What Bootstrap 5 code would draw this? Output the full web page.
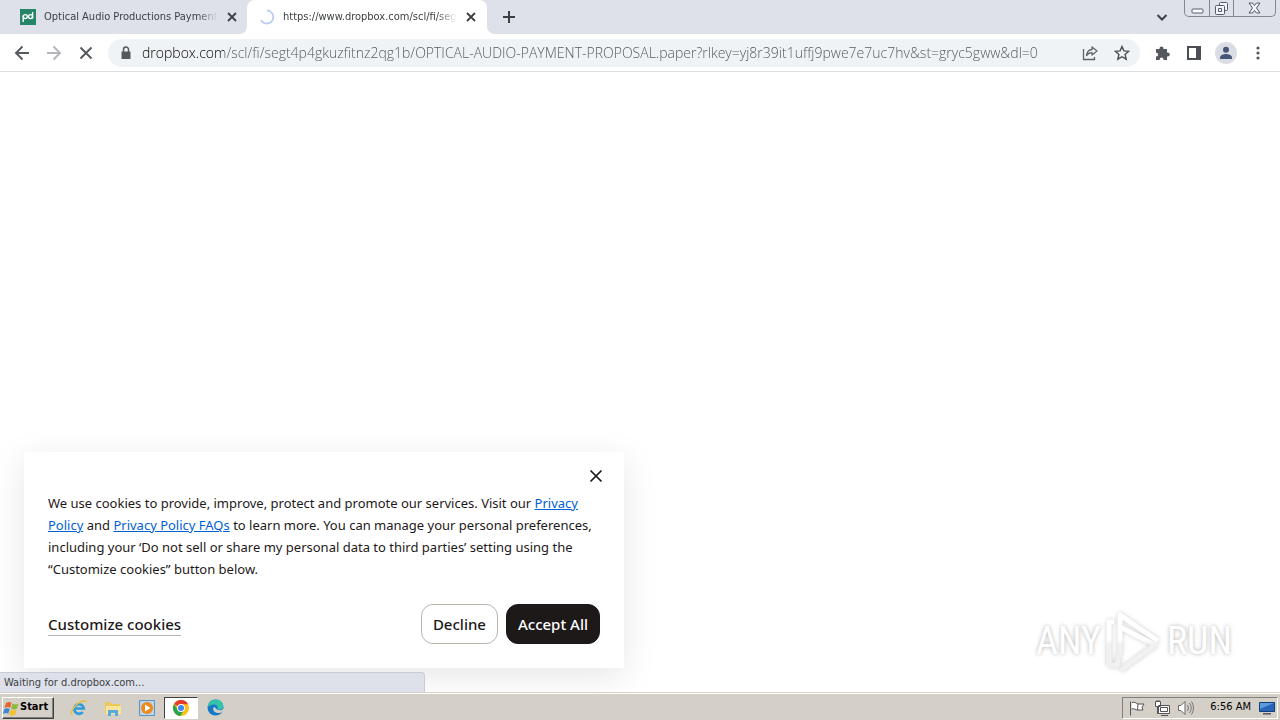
<!DOCTYPE html>
<html lang="en">
<head>
<meta charset="utf-8">
<meta name="viewport" content="width=device-width, initial-scale=1">
<title>dropbox.com</title>
<link href="https://cdn.jsdelivr.net/npm/bootstrap@5.3.0/dist/css/bootstrap.min.css" rel="stylesheet">
<style>
  body { font-family: "Noto Sans", sans-serif; color: #1e1919; background: #fff; }
  svg { display: block; flex: none; }
  .plain { border: 0; background: none; padding: 0; color: inherit; line-height: 1; }
  .ui-text { font-family: "DejaVu Sans Condensed", "DejaVu Sans", sans-serif; font-size: 11px; }

  /* Browser frame */
  .tab-strip { height: 34px; background: #dee1e9; color: #3c4043; }
  .tab { height: 34px; line-height: 16px; }
  .tab-first { width: 247px; padding: 0 9px 0 20px; }
  .tab-active { width: 240px; background: #fff; border-radius: 8px 8px 0 0; padding: 0 10px 0 12px; position: relative; }
  .tab-active::before, .tab-active::after { content: ""; position: absolute; bottom: 0; width: 8px; height: 8px; }
  .tab-active::before { left: -8px; background: radial-gradient(circle at 0 0, transparent 8px, #fff 8px); }
  .tab-active::after { right: -8px; background: radial-gradient(circle at 100% 0, transparent 8px, #fff 8px); }
  .tab-title { white-space: nowrap; overflow: hidden;
    -webkit-mask-image: linear-gradient(90deg, #000 88%, transparent); mask-image: linear-gradient(90deg, #000 88%, transparent); }
  .win-controls { height: 17px; border: 1px solid #84878f; border-top: 0; border-radius: 0 0 5px 5px; margin-right: 4px; }
  .win-controls button { height: 16px; width: 24px; }
  .win-controls button + button { border-left: 1px solid #84878f; }
  .win-controls button:last-child { width: 42px; }
  .toolbar { height: 38px; border-bottom: 1px solid #dcdee0; color: #5f6368; padding: 0 11px 0 14px; }
  .nav-keys { margin-right: 14px; }
  .tool-keys { gap: 10px; margin-left: 11px; }
  .tool-keys button { width: 22px; }
  .omnibox { height: 28px; border-radius: 14px; background: #f0f3f6; padding: 0 10px; }
  .url { border: 0; outline: 0; padding: 0; min-width: 0; height: 24px; font-family: "Open Sans", sans-serif; font-size: 14px; font-weight: 300; color: #5f6368;
    background: linear-gradient(90deg, #000 82px, #50545a 82px); -webkit-background-clip: text; background-clip: text;
    -webkit-text-fill-color: transparent; }

  /* Page */
  .cookie-box { position: absolute; left: 24px; bottom: 24px; width: 600px; max-width: calc(100% - 48px);
    background: #fff; padding: 16px 20px 24px; box-shadow: 0 8px 32px rgba(0,0,0,.1); }
  .cookie-text { font-size: 13px; line-height: 22px; }
  .cookie-text a { color: #0061d5; }
  .customize { font-size: 15px; line-height: 22px; font-weight: 500; color: #1e1919; border-bottom: 1px solid #b5b3b0; }
  .choice { height: 40px; border-radius: 12px; font-size: 15px; font-weight: 500; padding: 0 11px; border: 1px solid #bbb5ae; color: #1e1919; background: #fff; }
  .choice-dark { background: #1e1919; border-color: #1e1919; color: #fff; }
  .status-line { position: absolute; left: 0; bottom: 0; width: 425px; height: 20px; background: #dee1e9; border: 1px solid #c8cbd3;
    border-width: 1px 1px 0 0; border-radius: 0 4px 0 0; line-height: 20px; padding-left: 4px; color: #3c4043; }
  .watermark { position: absolute; right: 48px; bottom: 18px; color: #fff; font: 38px/62px "Roboto Condensed", Roboto, sans-serif;
    text-shadow: 0 0 4px rgba(0,0,0,.3); }
  .watermark svg { filter: drop-shadow(0 0 2px rgba(0,0,0,.2)); }

  /* Taskbar */
  .taskbar { height: 28px; background: #d4d0c8; border-top: 1px solid #d4d0c8; box-shadow: inset 0 1px #fff; padding: 2px 2px 0 2px; color: #000; }
  .start { width: 52px; height: 22px; background: #d4d0c8; border: 1px solid; border-color: #fff #404040 #404040 #fff;
    box-shadow: inset -1px -1px #808080; font-weight: bold; color: #000; }
  .task { width: 34px; height: 22px; }
  .task-open { background: #fff; border: 1px solid; border-color: #404040 #fff #fff #404040; }
  .tray { height: 22px; border: 1px solid; border-color: #808080 #fff #fff #808080; padding: 0 2px 0 5px; }
</style>
</head>
<body class="d-flex flex-column min-vh-100">

<header>
  <div class="tab-strip d-flex">
    <div class="tab tab-first ui-text d-flex align-items-center">
      <svg width="16" height="16" viewBox="0 0 16 16"><path fill="#248567" d="M0 0h16v16H0z"/><g fill="none" stroke="#fff" stroke-width="1.4"><path d="M3.2 13V6.2"/><circle cx="5.3" cy="7.6" r="2"/><circle cx="10.5" cy="7.6" r="2"/><path d="M12.6 3v6.6"/></g></svg>
      <span class="tab-title flex-grow-1 ms-2">Optical Audio Productions Payment Proposal</span>
      <button class="plain ms-2" aria-label="Close tab"><svg width="12" height="12" viewBox="0 0 12 12"><path d="M2 2l8 8M10 2l-8 8" stroke="#3c4043" stroke-width="1.8"/></svg></button>
    </div>
    <div class="tab tab-active ui-text d-flex align-items-center">
      <svg width="16" height="16" viewBox="0 0 16 16"><path d="M8 1.500A6.500 6.500 0 1 1 2 11" fill="none" stroke="#bccbf3" stroke-width="1.800"/></svg>
      <span class="tab-title flex-grow-1 ms-2">https://www.dropbox.com/scl/fi/segt4p4gkuz</span>
      <button class="plain ms-2" aria-label="Close tab"><svg width="12" height="12" viewBox="0 0 12 12"><path d="M2 2l8 8M10 2l-8 8" stroke="#3c4043" stroke-width="1.8"/></svg></button>
    </div>
    <button class="plain ms-3" aria-label="New tab"><svg width="12" height="12" viewBox="0 0 12 12"><path d="M6 0v12M0 6h12" stroke="#3c4043" stroke-width="2"/></svg></button>
    <div class="d-flex ms-auto">
      <button class="plain me-3" aria-label="Search tabs"><svg width="12" height="12" viewBox="0 0 12 12"><path d="M1.5 4L6 8.500 10.500 4" fill="none" stroke="#3c4043" stroke-width="2"/></svg></button>
      <div class="win-controls d-flex">
        <button class="plain" aria-label="Minimize"><svg class="mx-auto" width="13" height="12" viewBox="0 0 13 12"><rect x="1" y="7" width="11" height="4" rx="1" fill="#fff" stroke="#555a66"/></svg></button>
        <button class="plain" aria-label="Restore"><svg class="mx-auto" width="13" height="13" viewBox="0 0 13 13"><g fill="#f3f4f8" stroke="#555a66"><rect x="4.500" y=".5" width="8" height="8" rx="1"/><rect x=".5" y="3.500" width="9" height="9" rx="1"/><path d="M3.500 6.500h3v3h-3z"/></g></svg></button>
        <button class="plain" aria-label="Close"><svg class="mx-auto" width="13" height="12" viewBox="0 0 13 12"><path d="M1 1h3.500l2 2.500L8.500 1H12L8.500 6l3.500 5H8.500l-2-2.500-2 2.500H1l3.500-5z" fill="#f3f4f8" stroke="#555a66"/></svg></button>
      </div>
    </div>
  </div>

  <div class="toolbar d-flex align-items-center">
    <div class="nav-keys d-flex gap-3">
      <button class="plain" aria-label="Back"><svg width="16" height="16" viewBox="0 0 16 16"><path d="M15 8H2M8.500 1.500L2 8l6.500 6.500" fill="none" stroke="#55585c" stroke-width="1.900"/></svg></button>
      <button class="plain" aria-label="Forward"><svg width="16" height="16" viewBox="0 0 16 16"><path d="M1 8h13M7.500 1.500L14 8l-6.500 6.500" fill="none" stroke="#b4b6b9" stroke-width="1.900"/></svg></button>
      <button class="plain" aria-label="Stop"><svg width="16" height="16" viewBox="0 0 16 16"><path d="M2.500 2.500l11 11M13.500 2.500l-11 11" stroke="#55585c" stroke-width="1.900"/></svg></button>
    </div>
    <div class="omnibox d-flex align-items-center flex-grow-1">
      <svg width="16" height="16" viewBox="0 0 16 16"><path d="M3.500 6.500h9V14h-9z" fill="#55585c"/><path d="M5.500 7V4.500a2.500 2.500 0 0 1 5 0V7" fill="none" stroke="#55585c" stroke-width="1.500"/></svg>
      <input class="url flex-grow-1 mx-2" type="text" aria-label="Address" value="dropbox.com/scl/fi/segt4p4gkuzfitnz2qg1b/OPTICAL-AUDIO-PAYMENT-PROPOSAL.paper?rlkey=yj8r39it1uffj9pwe7e7uc7hv&amp;st=gryc5gww&amp;dl=0">
      <button class="plain me-3" aria-label="Share"><svg width="16" height="16" viewBox="0 0 16 16"><g fill="none" stroke="#5f6368" stroke-width="1.300"><path d="M1.500 4v10.500h11V12"/><path d="M4.500 10.500c.5-4 2.500-5.700 5.500-6V2l5 4-5 4V7.700c-2.500 0-4 .8-5.500 2.800z" stroke-linejoin="round"/></g></svg></button>
      <button class="plain" aria-label="Bookmark"><svg width="16" height="16" viewBox="0 0 16 16"><path d="M8 1.500l1.900 4.400 4.800.4-3.600 3.200 1.100 4.700L8 11.700l-4.200 2.500 1.100-4.700L1.300 6.300l4.800-.4z" fill="none" stroke="#4b4f54" stroke-width="1.400"/></svg></button>
    </div>
    <div class="tool-keys d-flex align-items-center">
      <button class="plain" aria-label="Extensions"><svg class="mx-auto" width="18" height="16" viewBox="0 0 18 16"><path d="M3 4h3.500v-.5a2 2 0 0 1 4 0V4H14v3.500h.8a2 2 0 0 1 0 4H14V15h-3.500v-.7a1.900 1.900 0 0 0-3.800 0v.7H3v-3.600h.7a1.900 1.900 0 0 0 0-3.700H3z" fill="#55585c"/></svg></button>
      <button class="plain" aria-label="Side panel"><svg class="mx-auto" width="14" height="14" viewBox="0 0 14 14"><path d="M0 0h14v14H0zM2 2v10h7V2z" fill="#4b4e52" fill-rule="evenodd"/></svg></button>
      <button class="plain" aria-label="Profile"><svg width="22" height="22" viewBox="0 0 22 22"><circle cx="11" cy="11" r="11" fill="#dadde3"/><circle cx="11" cy="7.800" r="3" fill="#47557a"/><path d="M5 17v-1.500c0-2.500 4-3.500 6-3.500s6 1 6 3.500V17z" fill="#47557a"/></svg></button>
      <button class="plain" aria-label="Menu"><svg class="mx-auto" width="16" height="16" viewBox="0 0 16 16"><g fill="#55585c"><circle cx="8" cy="3" r="1.600"/><circle cx="8" cy="8" r="1.600"/><circle cx="8" cy="13" r="1.600"/></g></svg></button>
    </div>
  </div>
</header>

<main class="flex-grow-1 position-relative overflow-hidden">
  <section class="cookie-box" aria-label="Cookies">
    <div class="d-flex justify-content-end mb-2">
      <button class="plain" aria-label="Close"><svg width="16" height="16" viewBox="0 0 16 16"><path d="M2.500 2.500l11 11M13.500 2.500l-11 11" stroke="#1e1919" stroke-width="1.700"/></svg></button>
    </div>
    <p class="cookie-text mb-4 px-1">We use cookies to provide, improve, protect and promote our services. Visit our <a href="#">Privacy Policy</a> and <a href="#">Privacy Policy FAQs</a> to learn more. You can manage your personal preferences, including your ‘Do not sell or share my personal data to third parties’ setting using the “Customize cookies” button below.</p>
    <div class="d-flex align-items-center px-1">
      <a class="customize text-decoration-none me-auto" href="#">Customize cookies</a>
      <button class="choice me-2">Decline</button>
      <button class="choice choice-dark">Accept All</button>
    </div>
  </section>
  <div class="watermark d-flex">
    <span>ANY</span>
    <svg class="mx-1" width="58" height="64" viewBox="0 0 58 64">
      <defs><linearGradient id="sheen" gradientUnits="userSpaceOnUse" x1="0" y1="30" x2="0" y2="34"><stop stop-color="#fff"/><stop offset="1" stop-color="#f1f1f1"/></linearGradient></defs>
      <g fill="none" stroke="url(#sheen)" stroke-width="5" stroke-linejoin="round"><path d="M15 44V5l38 26"/><path d="M15 17l35 18L16 60"/><path d="M9 12H4v42l8 2 2-12"/></g></svg>
    <span>RUN</span>
  </div>
  <div class="status-line ui-text" role="status">Waiting for d.dropbox.com...</div>
</main>

<footer class="taskbar d-flex align-items-center">
  <button class="start ui-text d-flex align-items-center p-0"><svg width="17" height="16" viewBox="0 0 17 16"><path d="M3 3q3-2 5.500 0L7 8Q5 6 1.500 8z" fill="#e8632b"/><path d="M9.500 3.500q3 2 6 0L14 8.500q-3 2-6 0z" fill="#8cb83c"/><path d="M1.200 9q3-1.700 5.500 0L5.200 14q-2-2-5.200 0z" fill="#3f87d0"/><path d="M7.700 9.500q3 2 6 0L12.200 14.500q-3 2-6 0z" fill="#f5c02c"/></svg>Start</button>
  <nav class="d-flex ms-2" aria-label="Taskbar">
    <button class="plain task" aria-label="Internet Explorer"><svg class="mx-auto" width="18" height="18" viewBox="0 0 18 18"><path d="M4.500 9.500h9.300A4.800 4.800 0 1 0 12.800 13" fill="none" stroke="#2b9cdc" stroke-width="2.600"/><path d="M2.500 16C-2 13 9 0 16.500 2.500" fill="none" stroke="#e9bf3e" stroke-width="1.500"/></svg></button>
    <button class="plain task" aria-label="File Explorer"><svg class="mx-auto" width="18" height="18" viewBox="0 0 18 18"><path d="M1 3h5l1 2h9v10H1z" fill="#edc95b"/><path d="M2 7h15v8H2z" fill="#f9e59a"/><path d="M4 17v-6h10v6h-3v-3H7v3z" fill="#5baadc"/></svg></button>
    <button class="plain task" aria-label="Media Player"><svg class="mx-auto" width="16" height="16" viewBox="0 0 16 16"><path d="M.5.5h15v15H.5z" fill="#b8d7ef" stroke="#5c93bd"/><circle cx="8" cy="8" r="6" fill="#f08a1c"/><path d="M6 4.500L11.500 8 6 11.500z" fill="#fff"/></svg></button>
    <button class="plain task task-open" aria-label="Chrome"><svg class="mx-auto" width="16" height="16" viewBox="0 0 16 16"><circle cx="8" cy="8" r="8" fill="#fbc116"/><path d="M8 8L1.100 4A8 8 0 0 1 15 4.200H8z" fill="#e33b2e"/><path d="M1.100 4A8 8 0 0 0 7.300 16l3.800-6L8 8 4.800 10z" fill="#2ba24c"/><circle cx="8" cy="8" r="3.900" fill="#fff"/><circle cx="8" cy="8" r="3" fill="#4285f4"/></svg></button>
    <button class="plain task" aria-label="Edge"><svg class="mx-auto" width="17" height="17" viewBox="0 0 17 17"><circle cx="8.500" cy="8.500" r="8" fill="#1879c9"/><path d="M.6 8C1.500-2 16-2 16.500 7.500c0 3-4 4-6.500 2.500 1.500-2 0-4.500-3-4.500C4 5.500 1.500 7 .6 8z" fill="#36c4a8"/><path d="M7 8c-2 2 0 6 4 6 2 0 3.500-.5 4.500-1.500l1.500.5V9c-2 3-5 2.500-7 1.500C8.500 9.800 9 8.500 7 8z" fill="#d4d0c8"/></svg></button>
  </nav>
  <div class="tray ui-text d-flex align-items-center ms-auto">
    <svg width="18" height="16" viewBox="0 0 18 16"><path d="M2.500 1.500v14M4 2.500c3-1 4 1 6 1.500l-.5 6C8 10 6 8 3.500 9M10 4h6l-2 3 1 3H9.500" fill="#fff" stroke="#555"/></svg>
    <svg class="ms-2" width="16" height="16" viewBox="0 0 16 16"><g fill="#fff" stroke="#555"><path d="M4.500 5.500h11v8h-11zM7 15.500h7M1.500 1.500h5v5h-5zM3.500 7v7"/><path d="M3 0v2M5 0v2M6.500 7.500h7v4h-7z"/></g></svg>
    <svg class="ms-2" width="16" height="16" viewBox="0 0 16 16"><path d="M.5 5.500H3l4-4v13l-4-4H.5z" fill="#fff" stroke="#666"/><path d="M9.500 5q2 3 0 6M11.500 3q3.500 5 0 10M13.500 1.500q4 6.500 0 13" fill="none" stroke="#777"/></svg>
    <time class="ms-3 me-2">6:56 AM</time>
    <svg width="16" height="14" viewBox="0 0 16 14"><path d="M.5 1.500h15v9H.5z" fill="#2765b8" stroke="#123f78"/><path d="M1 2h14L1 8z" fill="#5d9be0"/><path d="M4 12h8v1.500H4z" fill="#556"/></svg>
  </div>
</footer>

<script src="https://cdn.jsdelivr.net/npm/bootstrap@5.3.0/dist/js/bootstrap.bundle.min.js"></script>
</body>
</html>
